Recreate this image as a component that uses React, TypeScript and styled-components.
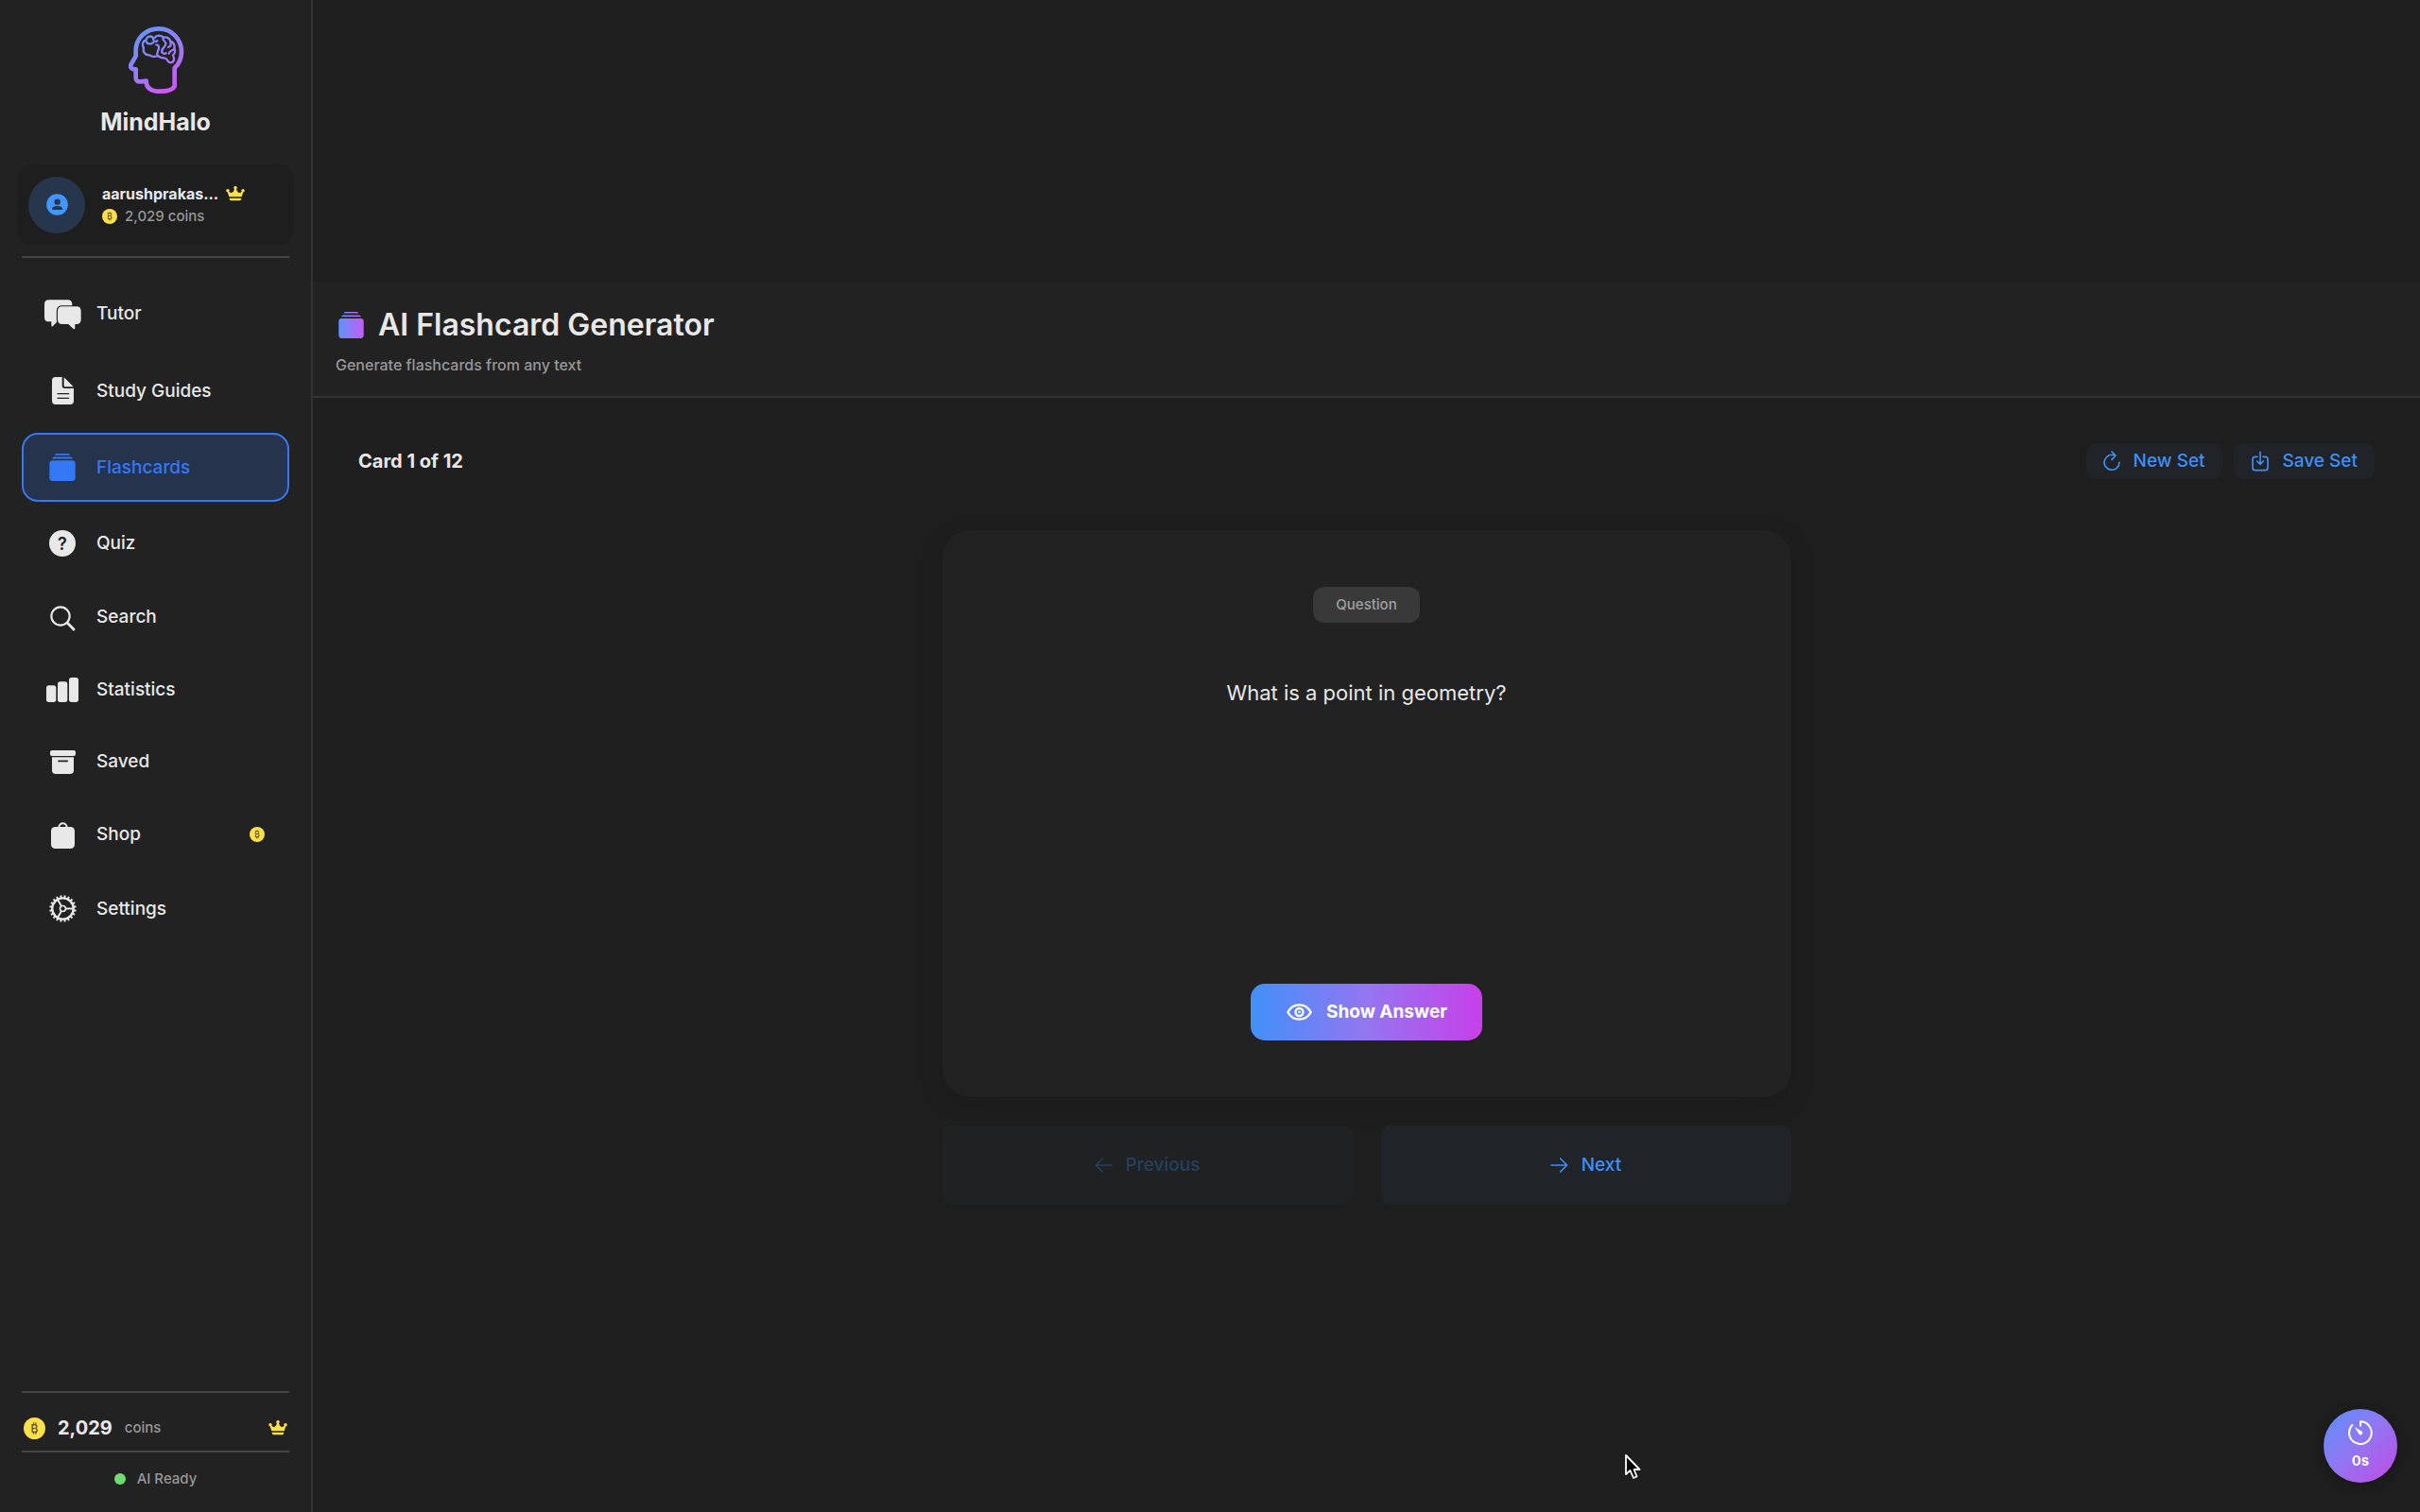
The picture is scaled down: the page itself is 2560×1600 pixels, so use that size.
import React, { useState } from "react";
import styled, { createGlobalStyle } from "styled-components";

const color = {
  page: "#1e1e1e",
  panel: "#222222",
  line: "#323232",
  rule: "#444444",
  text: "#e8e8e8",
  muted: "#989898",
  accent: "#3f8ff7",
  selected: "#3478f6",
  gold: "#fbdf4b",
};

const GlobalStyle = createGlobalStyle`
  *, *::before, *::after { box-sizing: border-box; }
  body {
    margin: 0;
    background: ${color.page};
    color: ${color.text};
    font-family: Inter, "Liberation Sans", sans-serif;
    font-size: 19px;
    line-height: 24px;
  }
  h1, p { margin: 0; }
  button { font: inherit; border: 0; cursor: pointer; }
  svg { display: block; flex: none; }
`;

const Shell = styled.div`
  display: flex;
  min-height: 100vh;
`;

const Sidebar = styled.aside`
  flex: none;
  display: flex;
  flex-direction: column;
  width: 331px;
  padding: 26px 23px 23px;
  background: ${color.panel};
  border-right: 2px solid ${color.line};
`;

const Brand = styled.div`
  display: flex;
  flex-direction: column;
  align-items: center;
  gap: 13px;
  font-size: 25px;
  font-weight: 700;
  line-height: 32px;
`;

const Profile = styled.div`
  display: flex;
  align-items: center;
  gap: 18px;
  height: 85px;
  margin: 29px -5px 12px;
  padding: 0 12px;
  border-radius: 16px;
  background: ${color.page};
`;

const Avatar = styled.div`
  display: grid;
  place-items: center;
  width: 60px;
  height: 60px;
  border-radius: 50%;
  background: #26374d;
`;

const Line = styled.div`
  display: flex;
  align-items: center;
  gap: 8px;
`;

const UserName = styled.span`
  font-size: 16px;
  font-weight: 700;
`;

const Small = styled.span`
  font-size: 15px;
  font-weight: 500;
  color: ${color.muted};
`;

const Rule = styled.hr`
  flex: none;
  width: 100%;
  height: 2px;
  margin: 0;
  border: 0;
  background: ${color.rule};
`;

const Menu = styled.nav`
  display: flex;
  flex-direction: column;
  gap: 8px;
  margin-top: 22px;
`;

const MenuLink = styled.a<{ $active: boolean }>`
  display: flex;
  align-items: center;
  gap: 16px;
  padding: 20px 24px 20px 21px;
  border: 2px solid ${(p) => (p.$active ? color.selected : "transparent")};
  border-radius: 17px;
  background: ${(p) => (p.$active ? "#26334d" : "transparent")};
  color: ${(p) => (p.$active ? color.selected : color.text)};
  font-weight: 500;
  text-decoration: none;
`;

const IconSlot = styled.span<{ $height: number }>`
  display: grid;
  place-items: center;
  width: 40px;
  height: ${(p) => p.$height}px;
`;

const Grow = styled.span`
  flex: 1;
`;

const Footer = styled.footer`
  margin-top: auto;
`;

const Balance = styled.div`
  display: flex;
  align-items: center;
  gap: 13px;
  padding: 25px 2px 12px;
`;

const Amount = styled.strong`
  font-size: 20px;
  font-weight: 700;
`;

const Status = styled.div`
  display: flex;
  align-items: center;
  justify-content: center;
  gap: 12px;
  padding-top: 16px;
`;

const Dot = styled.span`
  width: 12px;
  height: 12px;
  border-radius: 50%;
  background: #6fdc72;
`;

const Main = styled.main`
  flex: 1;
  display: flex;
  flex-direction: column;
  justify-content: center;
  min-width: 0;
`;

const Header = styled.header`
  display: flex;
  flex-direction: column;
  gap: 10px;
  padding: 25px 24px 21px;
  background: ${color.panel};
  border-bottom: 2px solid ${color.line};
`;

const Title = styled.h1`
  display: flex;
  align-items: center;
  gap: 15px;
  padding-left: 3px;
  font-size: 32px;
  font-weight: 600;
  line-height: 40px;
`;

const Subtitle = styled.p`
  font-size: 16px;
  font-weight: 500;
  color: ${color.muted};
`;

const Content = styled.div`
  display: flex;
  flex-direction: column;
  padding: 48px 48px 26px;
`;

const Toolbar = styled.div`
  display: flex;
  align-items: center;
  gap: 12px;
  margin-bottom: 54px;
`;

const Counter = styled.span`
  flex: 1;
  font-size: 20px;
  font-weight: 700;
`;

const SoftButton = styled.button`
  display: flex;
  align-items: center;
  justify-content: center;
  gap: 14px;
  height: 38px;
  padding: 0 18px;
  border-radius: 10px;
  background: #202328;
  color: ${color.accent};
  font-weight: 500;
`;

const Deck = styled.section`
  display: flex;
  flex-direction: column;
  gap: 30px;
  width: 100%;
  max-width: 898px;
  margin: 0 auto;
`;

const Card = styled.article`
  display: flex;
  flex-direction: column;
  align-items: center;
  min-height: 600px;
  padding: 60px;
  border-radius: 30px;
  background: ${color.panel};
  box-shadow: 0 8px 30px rgba(0, 0, 0, 0.1);
`;

const Tag = styled.span`
  padding: 7px 24px;
  border-radius: 12px;
  background: #393939;
  color: #a0a0a0;
  font-size: 15px;
  font-weight: 500;
`;

const Prompt = styled.p`
  flex: 1;
  padding-top: 56px;
  font-size: 22px;
  font-weight: 400;
  line-height: 36px;
  text-align: center;
`;

const RevealButton = styled.button`
  display: flex;
  align-items: center;
  gap: 15px;
  height: 60px;
  padding: 0 37px 0 38px;
  border-radius: 15px;
  background: linear-gradient(90deg, #4190f9, #9376f0 50%, #c840e9);
  color: #ffffff;
  font-weight: 700;
`;

const Pager = styled.div`
  display: grid;
  grid-template-columns: 1fr 1fr;
  gap: 30px;
`;

const PagerButton = styled(SoftButton)`
  height: 84px;
  &:disabled {
    background: #202122;
    color: #26405f;
    cursor: default;
  }
`;

const TimerButton = styled.button`
  position: fixed;
  right: 24px;
  bottom: 31px;
  display: flex;
  flex-direction: column;
  align-items: center;
  justify-content: center;
  gap: 5px;
  width: 78px;
  height: 78px;
  padding: 0;
  border-radius: 50%;
  background: linear-gradient(135deg, #5b90fa, #8f78f2 45%, #c34ae6);
  box-shadow: 0 2px 12px rgba(0, 0, 0, 0.3);
  color: #ffffff;
  font-size: 15px;
  font-weight: 700;
`;

const Pointer = styled.svg`
  position: fixed;
  left: 67.1%;
  top: 96.1%;
  pointer-events: none;
`;

const Logo = () => (
  <svg width="62" height="74" viewBox="0 0 186 222" fill="none" strokeLinecap="round" strokeLinejoin="round">
    <defs>
      <linearGradient id="logo" gradientUnits="userSpaceOnUse" x1="25" y1="20" x2="160" y2="210">
        <stop offset="0" stopColor="#6295fb" />
        <stop offset="0.5" stopColor="#9a7cf6" />
        <stop offset="1" stopColor="#d354f0" />
      </linearGradient>
    </defs>
    <g stroke="url(#logo)">
      <path
        strokeWidth="14"
        d="M29 100V84C29 43 61 13 102 13C143 13 174 46 174 87C174 108 166 125 152 138V196C146 207 126 212 107 212C82 212 62 205 62 179L44 181C34 182 29 177 29 168V142C16 143 10 137 14 126Z"
      />
      <path
        strokeWidth="7"
        d="M84 42C78 34 64 37 62 48C50 52 48 66 54 74C50 88 60 98 73 97C80 103 92 103 98 99C104 103 112 106 122 107C126 107 127 110 130 115C134 123 148 123 150 112C150 106 149 102 147 97C154 91 155 82 151 76C154 66 149 56 139 53C136 42 124 38 117 41C108 33 94 33 89 42"
      />
      <path
        strokeWidth="7"
        d="M84 42C83 51 88 56 97 52M62 54C66 63 76 63 84 58M98 99C93 86 104 82 102 70C101 66 98 64 94 64M117 41C110 50 126 52 124 62C122 74 108 76 112 88C114 92 120 94 125 91M139 54C142 64 138 70 132 72M151 77C146 84 136 82 134 92"
      />
    </g>
  </svg>
);

const Coin = ({ size }: { size: number }) => (
  <svg width={size} height={size} viewBox="0 0 24 24">
    <circle cx="12" cy="12" r="12" fill={color.gold} />
    <path d="M11 5.500v2M13.500 5.500v2M11 16.500v2M13.500 16.500v2" stroke="#5a5020" strokeWidth="1.200" />
    <text x="12" y="16.500" textAnchor="middle" fontFamily="Inter, sans-serif" fontSize="12.500" fontWeight="500" fill="#5a5020">
      B
    </text>
  </svg>
);

const Crown = () => (
  <svg width="20" height="16" viewBox="0 0 60 48" fill={color.gold}>
    <path d="M6 9a5 5 0 0 1 4 8c4 4 8 6 12 2 3-4 4-7 5-10a5 5 0 1 1 6 0c1 3 2 6 5 10 4 4 8 2 12-2a5 5 0 1 1 5 2L50 34H10L5 19a5 5 0 0 1 1-10Z" />
    <path d="M11 38H49L48 43Q47 46 44 46H16Q13 46 12 43Z" />
  </svg>
);

const Person = () => (
  <svg width="23" height="23" viewBox="0 0 69 69">
    <circle cx="34.500" cy="34.500" r="34" fill="#4196f8" />
    <circle cx="35" cy="26" r="9.500" fill="#26374d" />
    <path d="M18 49C18 36 52 36 52 49Q52 51 49 51H21Q18 51 18 49Z" fill="#26374d" />
  </svg>
);

const Chats = () => (
  <svg width="39" height="32" viewBox="0 0 117 96" fill="currentColor">
    <path d="M14 1H74Q88 1 88 15V56Q88 70 74 70H41L27 84Q22 88 22 82V70H14Q0 70 0 56V15Q0 1 14 1Z" />
    <path
      stroke={color.panel}
      strokeWidth="7"
      paintOrder="stroke"
      d="M56 22H102Q116 22 116 36V64Q116 78 102 78H97V90Q97 97 91 92L76 78H56Q42 78 42 64V36Q42 22 56 22Z"
    />
  </svg>
);

const Page = () => (
  <svg width="23" height="29" viewBox="0 0 69 87" fill="currentColor">
    <path d="M11 0H32V27Q32 36 41 36H69V76Q69 87 58 87H11Q0 87 0 76V11Q0 0 11 0Z" />
    <path d="M38 1L68 31H42Q38 31 38 27Z" />
    <path d="M18 53H53M18 67H53" stroke={color.panel} strokeWidth="4" strokeLinecap="round" />
  </svg>
);

const Stack = ({ width, gradient }: { width: number; gradient?: boolean }) => (
  <svg width={width} height={width + 1} viewBox="0 0 84 89" fill={gradient ? "url(#stack)" : "currentColor"}>
    {gradient && (
      <defs>
        <linearGradient id="stack" gradientUnits="userSpaceOnUse" x1="0" y1="0" x2="84" y2="0">
          <stop offset="0" stopColor="#5f94fb" />
          <stop offset="1" stopColor="#c65cf2" />
        </linearGradient>
      </defs>
    )}
    <path d="M10 22H74Q84 22 84 33V78Q84 89 74 89H10Q0 89 0 78V33Q0 22 10 22Z" />
    <path d="M15 11H69Q74 11 75 17H9Q10 11 15 11Z" />
    <path d="M22 0H62Q66 0 67 5H17Q18 0 22 0Z" />
  </svg>
);

const Question = () => (
  <svg width="28" height="28" viewBox="0 0 28 28">
    <circle cx="14" cy="14" r="14" fill="currentColor" />
    <text x="14" y="20.500" textAnchor="middle" fontFamily="Inter, sans-serif" fontSize="18" fontWeight="600" fill={color.panel}>
      ?
    </text>
  </svg>
);

const Magnifier = () => (
  <svg width="27" height="27" viewBox="0 0 81 81" fill="none" stroke="currentColor" strokeLinecap="round">
    <circle cx="33" cy="33" r="29" strokeWidth="6.500" />
    <path d="M55 55L75 75" strokeWidth="8.500" />
  </svg>
);

const Bars = () => (
  <svg width="34" height="26" viewBox="0 0 102 78" fill="currentColor">
    <rect x="0" y="25" width="31" height="53" rx="8" />
    <rect x="36" y="13" width="31" height="65" rx="8" />
    <rect x="72" y="0" width="30" height="78" rx="8" />
  </svg>
);

const Archive = () => (
  <svg width="27" height="25" viewBox="0 0 81 75" fill="currentColor">
    <rect width="81" height="18" rx="6" />
    <path d="M6 22H75V63Q75 75 63 75H18Q6 75 6 63Z" />
    <path d="M27 34H55" stroke={color.panel} strokeWidth="5" strokeLinecap="round" />
  </svg>
);

const Bag = () => (
  <svg width="25" height="28" viewBox="0 0 75 84" fill="currentColor">
    <rect y="15" width="75" height="69" rx="13" />
    <path d="M25 18C25 -1 50 -1 50 18" fill="none" stroke="currentColor" strokeWidth="6" />
  </svg>
);

const gearTeeth = Array.from({ length: 20 }, (_, i) => i * 18 + 9);

const Gear = () => (
  <svg width="29" height="29" viewBox="-44 -44 88 88" fill="none" stroke="currentColor">
    <circle r="34" strokeWidth="7" />
    <circle r="9" strokeWidth="5" />
    {gearTeeth.map((angle) => (
      <path key={angle} d="M35 0H43" strokeWidth="6" transform={`rotate(${angle})`} />
    ))}
    {[0, 120, 240].map((angle) => (
      <path key={angle} d="M10 0H33" strokeWidth="6" transform={`rotate(${angle})`} />
    ))}
  </svg>
);

const Reload = () => (
  <svg width="18" height="22" viewBox="0 0 54 66" fill="none" stroke="currentColor" strokeWidth="5" strokeLinecap="round" strokeLinejoin="round">
    <path d="M51 37A24 24 0 1 1 37 15M27 3L39 15L27 28" />
  </svg>
);

const SaveIcon = () => (
  <svg width="20" height="22" viewBox="-3 0 60 66" fill="none" stroke="currentColor" strokeWidth="5" strokeLinecap="round" strokeLinejoin="round">
    <path d="M18 19H11Q3 19 3 27V54Q3 62 11 62H43Q51 62 51 54V27Q51 19 43 19H36M27 4V42M17 33L27 43L37 33" />
  </svg>
);

const Eye = () => (
  <svg width="27" height="18" viewBox="0 0 81 54" fill="none" stroke="currentColor" strokeWidth="7">
    <path d="M4 27C12 12 25 4 40.500 4S69 12 77 27C69 42 56 50 40.500 50S12 42 4 27Z" />
    <circle cx="40.500" cy="27" r="12" strokeWidth="7" />
    <circle cx="40.500" cy="27" r="4" fill="currentColor" stroke="none" />
  </svg>
);

const Arrow = ({ back }: { back?: boolean }) => (
  <svg width="19" height="16" viewBox="0 0 57 48" fill="none" stroke="currentColor" strokeWidth="5" strokeLinecap="round" strokeLinejoin="round">
    <path d={back ? "M54 24H4M25 3L4 24L25 45" : "M3 24H53M32 3L53 24L32 45"} />
  </svg>
);

const Timer = () => (
  <svg width="26" height="26" viewBox="0 0 78 78" fill="none" stroke="currentColor" strokeWidth="6" strokeLinecap="round" strokeLinejoin="round">
    <path d="M39 17V4A35.500 35.500 0 1 1 13 15" />
    <path d="M20 21L44 35A6 6 0 0 1 35 44Z" fill="currentColor" stroke="none" />
  </svg>
);

type MenuEntry = { label: string; slot: number; icon: React.ReactNode; coin?: boolean };

const menu: MenuEntry[] = [
  { label: "Tutor", slot: 30, icon: <Chats /> },
  { label: "Study Guides", slot: 29, icon: <Page /> },
  { label: "Flashcards", slot: 29, icon: <Stack width={28} /> },
  { label: "Quiz", slot: 28, icon: <Question /> },
  { label: "Search", slot: 24, icon: <Magnifier /> },
  { label: "Statistics", slot: 25, icon: <Bars /> },
  { label: "Saved", slot: 24, icon: <Archive /> },
  { label: "Shop", slot: 25, icon: <Bag />, coin: true },
  { label: "Settings", slot: 29, icon: <Gear /> },
];

export default function App() {
  const [active, setActive] = useState("Flashcards");

  return (
    <>
      <GlobalStyle />
      <Shell>
        <Sidebar>
          <Brand>
            <Logo />
            MindHalo
          </Brand>
          <Profile>
            <Avatar>
              <Person />
            </Avatar>
            <div>
              <Line>
                <UserName>aarushprakas...</UserName>
                <Crown />
              </Line>
              <Line>
                <Coin size={16} />
                <Small>2,029 coins</Small>
              </Line>
            </div>
          </Profile>
          <Rule />
          <Menu aria-label="Sections">
            {menu.map((entry) => (
              <MenuLink
                key={entry.label}
                href="#"
                $active={entry.label === active}
                aria-current={entry.label === active ? "page" : undefined}
                onClick={() => setActive(entry.label)}
              >
                <IconSlot $height={entry.slot}>{entry.icon}</IconSlot>
                {entry.label}
                {entry.coin && (
                  <>
                    <Grow />
                    <Coin size={16} />
                  </>
                )}
              </MenuLink>
            ))}
          </Menu>
          <Footer>
            <Rule />
            <Balance>
              <Coin size={23} />
              <Amount>2,029</Amount>
              <Small>coins</Small>
              <Grow />
              <Crown />
            </Balance>
            <Rule />
            <Status>
              <Dot />
              <Small>AI Ready</Small>
            </Status>
          </Footer>
        </Sidebar>

        <Main>
          <Header>
            <Title>
              <Stack width={27} gradient />
              AI Flashcard Generator
            </Title>
            <Subtitle>Generate flashcards from any text</Subtitle>
          </Header>
          <Content>
            <Toolbar>
              <Counter>Card 1 of 12</Counter>
              <SoftButton type="button">
                <Reload />
                New Set
              </SoftButton>
              <SoftButton type="button">
                <SaveIcon />
                Save Set
              </SoftButton>
            </Toolbar>
            <Deck>
              <Card>
                <Tag>Question</Tag>
                <Prompt>What is a point in geometry?</Prompt>
                <RevealButton type="button">
                  <Eye />
                  Show Answer
                </RevealButton>
              </Card>
              <Pager>
                <PagerButton type="button" disabled>
                  <Arrow back />
                  Previous
                </PagerButton>
                <PagerButton type="button">
                  <Arrow />
                  Next
                </PagerButton>
              </Pager>
            </Deck>
          </Content>
        </Main>
      </Shell>

      <TimerButton type="button" aria-label="Study timer, 0s">
        <Timer />
        <span>0s</span>
      </TimerButton>
      <Pointer width="18" height="28" viewBox="0 0 18 28">
        <path d="M2 2V22L6.500 18L10 26L13.500 24.500L10.500 17H16.500Z" fill="#000" stroke="#fff" strokeWidth="1.800" strokeLinejoin="round" />
      </Pointer>
    </>
  );
}
